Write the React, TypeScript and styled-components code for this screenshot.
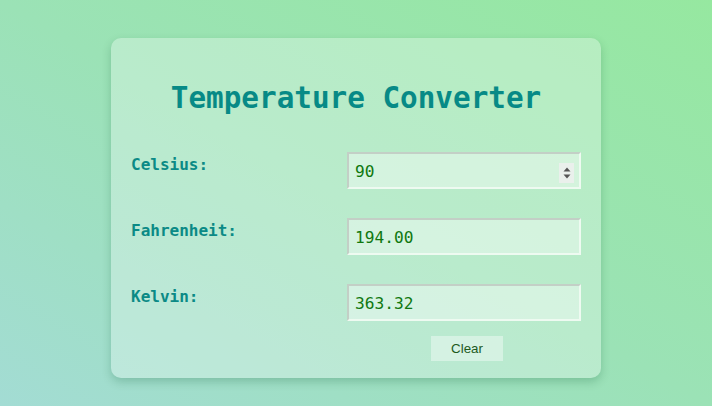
import React, { useState } from "react";
import styled, { createGlobalStyle } from "styled-components";

const Global = createGlobalStyle`
  html, body { margin: 0; padding: 0; }
  body {
    min-height: 406px;
    background: linear-gradient(to top right, #a3dcd4 0%, #9be2b6 50%, #96e8a0 100%);
    font-family: "DejaVu Sans Mono", "Liberation Mono", monospace;
  }
`;

const Page = styled.div`
  display: flex;
  justify-content: center;
  align-items: flex-start;
  padding-top: 38px;
  min-height: 406px;
  box-sizing: border-box;
`;

const Card = styled.div`
  width: 490px;
  box-sizing: border-box;
  padding: 20px 20px 17px;
  border-radius: 10px;
  background: rgba(255, 255, 255, 0.3);
  box-shadow: 0 4px 10px rgba(0, 80, 40, 0.22);
`;

const Title = styled.h1`
  margin: 22px 0 36px;
  font-size: 29.3px;
  line-height: 36px;
  font-weight: bold;
  text-align: center;
  color: #078a86;
`;

const Grid = styled.div`
  display: grid;
  grid-template-columns: 1fr 234px;
  row-gap: 29px;
  align-items: start;
`;

const Label = styled.label`
  padding-top: 3px;
  font-size: 16px;
  line-height: 19px;
  font-weight: bold;
  color: #0b8a86;
`;

const Field = styled.div`
  position: relative;
  height: 37px;
`;

const Input = styled.input`
  width: 100%;
  height: 37px;
  box-sizing: border-box;
  margin: 0;
  padding: 1px 6px 0;
  border-width: 2px;
  border-style: solid;
  border-color: #c3cfc6 #eefaf1 #eefaf1 #c3cfc6;
  background: rgba(255, 255, 255, 0.4);
  font-family: "DejaVu Sans Mono", "Liberation Mono", monospace;
  font-size: 16.2px;
  color: #107810;
  outline: none;
`;

const Spinner = styled.div`
  position: absolute;
  top: 11px;
  right: 7px;
  width: 15px;
  height: 20px;
  background: #eaf0ec;
  display: flex;
  align-items: center;
  justify-content: center;
`;

const ButtonCell = styled.div`
  grid-column: 2;
  display: flex;
  justify-content: center;
  margin-top: -14px;
  padding-left: 6px;
`;

const ClearButton = styled.button`
  width: 72px;
  height: 25px;
  border: none;
  background: rgba(255, 255, 255, 0.4);
  font-family: "Liberation Sans", Arial, sans-serif;
  font-size: 13.33px;
  color: #1d5a1d;
  cursor: pointer;
`;

export default function App() {
  const [c, setC] = useState("90");
  const n = parseFloat(c);
  const f = isNaN(n) ? "" : (n * 9 / 5 + 32).toFixed(2);
  const k = isNaN(n) ? "" : (n + 273.32).toFixed(2);
  return (
    <>
      <Global />
      <Page>
        <Card>
          <Title>Temperature Converter</Title>
          <Grid>
            <Label>Celsius:</Label>
            <Field>
              <Input value={c} onChange={(e) => setC(e.target.value)} />
              <Spinner>
                <svg width="10" height="16" viewBox="0 0 10 16">
                  <path d="M5 2.5 L8.5 6.5 L1.5 6.5 Z" fill="#555" />
                  <path d="M1.5 9.5 L8.5 9.5 L5 13.5 Z" fill="#555" />
                </svg>
              </Spinner>
            </Field>
            <Label>Fahrenheit:</Label>
            <Field>
              <Input value={f} readOnly />
            </Field>
            <Label>Kelvin:</Label>
            <Field>
              <Input value={k} readOnly />
            </Field>
            <ButtonCell>
              <ClearButton onClick={() => setC("")}>Clear</ClearButton>
            </ButtonCell>
          </Grid>
        </Card>
      </Page>
    </>
  );
}
